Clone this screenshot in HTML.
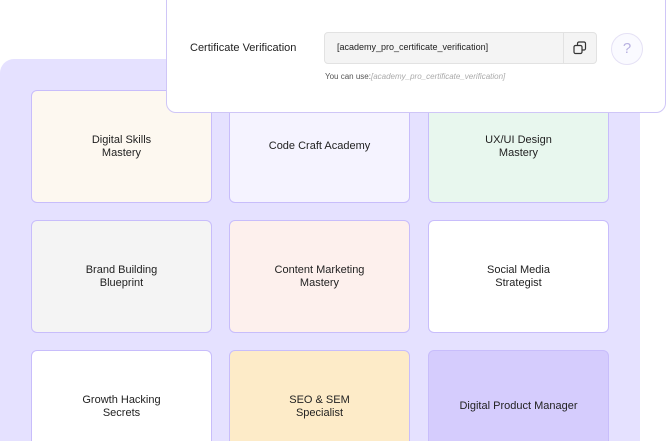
<!DOCTYPE html>
<html><head><style>
*{box-sizing:border-box;margin:0;padding:0}
html,body{width:672px;height:441px;overflow:hidden}
body{background:#fff;font-family:"Liberation Sans",sans-serif;position:relative}
.panel{position:absolute;left:0;top:59px;width:640px;height:382px;background:#e5e1ff;border-radius:14px 14px 0 0}
.card{position:absolute;width:181px;height:113px;border:1px solid #c8bdfb;border-radius:6px;display:flex;align-items:center;justify-content:center;text-align:center;font-size:11px;line-height:12.5px;color:#222}
.pop{position:absolute;left:166px;top:-2px;width:500px;height:115px;background:#fff;border:1px solid #cfc6f7;border-radius:0 0 10px 10px}
</style></head><body>
<div class="panel"></div>
<div class="card" style="left:31px;top:90px;background:#fdf8f0">Digital Skills<br>Mastery</div>
<div class="card" style="left:229px;top:90px;background:#f5f3ff">Code Craft Academy</div>
<div class="card" style="left:428px;top:90px;background:#e8f7ee">UX/UI Design<br>Mastery</div>
<div class="card" style="left:31px;top:220px;background:#f4f4f4">Brand Building<br>Blueprint</div>
<div class="card" style="left:229px;top:220px;background:#fdf0ed">Content Marketing<br>Mastery</div>
<div class="card" style="left:428px;top:220px;background:#fff">Social Media<br>Strategist</div>
<div class="card" style="left:31px;top:350px;background:#fff">Growth Hacking<br>Secrets</div>
<div class="card" style="left:229px;top:350px;background:#fdebc8">SEO &amp; SEM<br>Specialist</div>
<div class="card" style="left:428px;top:350px;background:#d5ccfd">Digital Product Manager</div>
<div class="pop">
  <div style="position:absolute;left:23px;top:43px;font-size:11px;color:#222">Certificate Verification</div>
  <div style="position:absolute;left:157px;top:33px;width:273px;height:32px;background:#f4f4f4;border:1px solid #e2e2e2;border-radius:4px">
    <div style="position:absolute;left:12px;top:9px;font-size:9px;color:#222">[academy_pro_certificate_verification]</div>
    <div style="position:absolute;left:238px;top:0;width:1px;height:30px;background:#e2e2e2"></div>
    <svg style="position:absolute;left:248px;top:8px" width="14" height="14" viewBox="0 0 14 14" fill="none" stroke="#333" stroke-width="1.2"><rect x="1" y="4.5" width="8" height="8" rx="1.5"/><path d="M4.5 4.5V2.5a1.5 1.5 0 0 1 1.5-1.5h5a1.5 1.5 0 0 1 1.5 1.5v5a1.5 1.5 0 0 1-1.5 1.5H9"/></svg>
  </div>
  <div style="position:absolute;left:444px;top:34px;width:32px;height:32px;border-radius:50%;border:1px solid #e5e1f5;background:#fafaff;color:#b7b0e0;font-size:15px;text-align:center;line-height:30px">?</div>
  <div style="position:absolute;left:158px;top:73px;font-size:8px;color:#555">You can use:<i style="color:#aaa">[academy_pro_certificate_verification]</i></div>
</div>
</body></html>
